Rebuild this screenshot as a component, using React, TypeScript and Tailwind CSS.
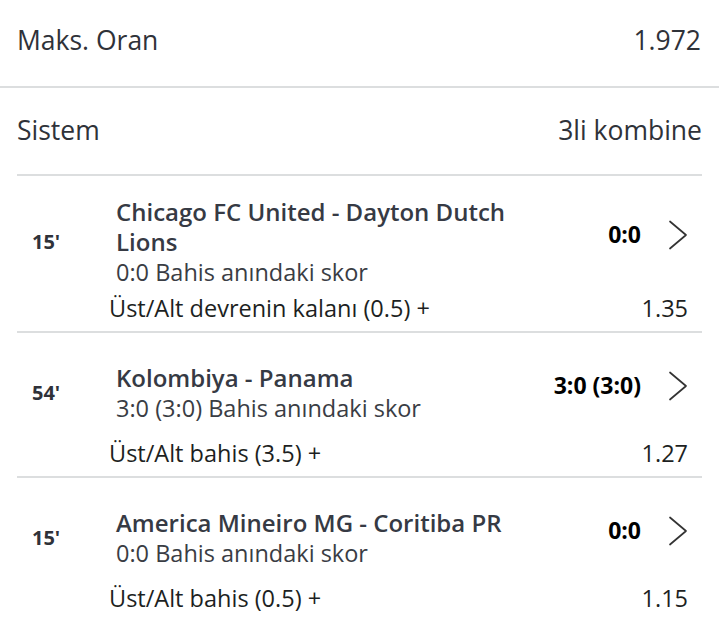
import React from 'react';

type Match = {
  minute: string;
  title: string;
  score: string;
  sub: string;
  bet: string;
  odd: string;
};

const matches: Match[] = [
  {
    minute: "15'",
    title: 'Chicago FC United - Dayton Dutch Lions',
    score: '0:0',
    sub: '0:0 Bahis anındaki skor',
    bet: 'Üst/Alt devrenin kalanı (0.5) +',
    odd: '1.35',
  },
  {
    minute: "54'",
    title: 'Kolombiya - Panama',
    score: '3:0 (3:0)',
    sub: '3:0 (3:0) Bahis anındaki skor',
    bet: 'Üst/Alt bahis (3.5) +',
    odd: '1.27',
  },
  {
    minute: "15'",
    title: 'America Mineiro MG - Coritiba PR',
    score: '0:0',
    sub: '0:0 Bahis anındaki skor',
    bet: 'Üst/Alt bahis (0.5) +',
    odd: '1.15',
  },
];

const Chevron = () => (
  <svg width="20" height="30" viewBox="0 0 20 30" fill="none" className="shrink-0">
    <path d="M2 1.5 L18 15 L2 28.5" stroke="#333" strokeWidth="1.7" strokeLinecap="round" strokeLinejoin="round" />
  </svg>
);

const MatchRow: React.FC<{ match: Match; last?: boolean }> = ({ match, last }) => (
  <div className={`mx-[17px] pt-[21px] ${last ? '' : 'border-b-2 border-[#dcdedf]'}`}>
    <div className="flex items-center min-h-[78px]">
      <div className="w-[99px] pl-[15px] text-[20px] font-bold text-[#2f3239]">{match.minute}</div>
      <div className="w-[420px] text-[#363a44]">
        <div className="text-[24px] font-semibold leading-[30px]">{match.title}</div>
        <div className="text-[23.5px] leading-[30px] text-[#3a3d44]">{match.sub}</div>
      </div>
      <div className="flex-1 flex items-center justify-end gap-[27px] pr-[14px] mb-[15px]">
        <span className="text-[23px] font-bold text-black">{match.score}</span>
        <Chevron />
      </div>
    </div>
    <div className="flex items-center justify-between h-[44px] pl-[92px] pr-[14px] text-[23.5px] text-[#1d1f22]">
      <span>{match.bet}</span>
      <span>{match.odd}</span>
    </div>
  </div>
);

export default function App() {
  return (
    <div className="w-[719px] min-h-[635px] bg-white font-['Open_Sans',sans-serif]">
      <div className="flex items-center justify-between h-[88px] pb-[4px] px-[17px] border-b-2 border-[#dcdedf]">
        <span className="text-[26.5px] text-[#2f3239]">Maks. Oran</span>
        <span className="text-[26.5px] text-[#2f3239] pr-[1px]">1.972</span>
      </div>
      <div className="mx-[17px] flex items-center justify-between h-[88px] border-b-2 border-[#dcdedf]">
        <span className="text-[26.5px] text-[#2f3239]">Sistem</span>
        <span className="text-[26.5px] text-[#2f3239]">3li kombine</span>
      </div>
      {matches.map((m, i) => (
        <MatchRow key={i} match={m} last={i === matches.length - 1} />
      ))}
    </div>
  );
}
